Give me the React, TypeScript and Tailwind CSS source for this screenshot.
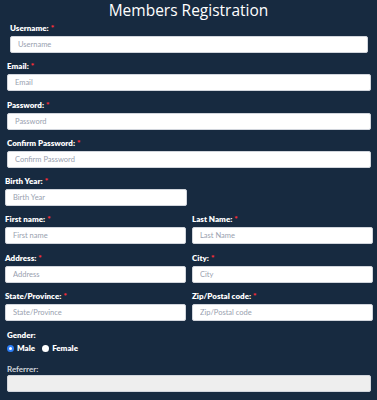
import React from "react"

type FieldProps = {
  label: string
  placeholder: string
  required?: boolean
  pad?: string
}

function Field({ label, placeholder, required = true, pad = "" }: FieldProps) {
  return (
    <div className={`flex flex-col ${pad}`}>
      <label className="h-3 flex items-center text-[8px] font-extrabold text-white leading-none">
        {label}
        {required && <span className="ml-[2px] text-red-500">*</span>}
      </label>
      <input
        placeholder={placeholder}
        className="mt-[2px] h-[17px] w-full rounded-[2px] border border-gray-300 bg-white px-[7px] text-[7.5px] text-gray-700 placeholder:text-gray-400 outline-none"
      />
    </div>
  )
}

export default function App() {
  return (
    <div
      className="w-[377px] h-[400px] overflow-hidden bg-[#172a40]"
      style={{ fontFamily: "Lato, 'Liberation Sans', sans-serif" }}
    >
      <h1
        className="h-[22px] text-center text-[15.5px] leading-[21px] text-white"
        style={{ fontFamily: "'Open Sans', sans-serif" }}
      >
        Members Registration
      </h1>

      <div className="flex flex-col gap-[7.3px]">
        <Field label="Username:" placeholder="Username" pad="pl-[10px] pr-[9px]" />
        <Field label="Email:" placeholder="Email" pad="pl-[7px] pr-[6px]" />
        <Field label="Password:" placeholder="Password" pad="pl-[7px] pr-[6px]" />
        <Field label="Confirm Password:" placeholder="Confirm Password" pad="pl-[7px] pr-[6px]" />
        <div className="pl-[5px] w-[187px]">
          <Field label="Birth Year:" placeholder="Birth Year" />
        </div>
        <div className="grid grid-cols-2 gap-[6px] pl-[5px] pr-[4px]">
          <Field label="First name: " placeholder="First name" />
          <Field label="Last Name:" placeholder="Last Name" />
        </div>
        <div className="grid grid-cols-2 gap-[6px] pl-[5px] pr-[4px]">
          <Field label="Address:" placeholder="Address" />
          <Field label="City:" placeholder="City" />
        </div>
        <div className="grid grid-cols-2 gap-[6px] pl-[5px] pr-[4px]">
          <Field label="State/Province:" placeholder="State/Province" />
          <Field label="Zip/Postal code:" placeholder="Zip/Postal code" />
        </div>
      </div>

      <div className="mt-[8px] pl-[7px]">
        <div className="h-3 flex items-center text-[8px] font-extrabold text-white">Gender:</div>
        <div className="mt-[1px] h-3 flex items-center gap-[3px] text-[8px] font-extrabold text-white">
          <span className="w-[7px] h-[7px] rounded-full border-[2px] border-[#2d7ff9] bg-white" />
          <span className="mr-[4px]">Male</span>
          <span className="w-[7px] h-[7px] rounded-full bg-white" />
          <span>Female</span>
        </div>
      </div>

      <div className="mt-[9px] pl-[7px] pr-[6px]">
        <div className="h-3 flex items-center text-[8px] font-bold text-gray-300">Referrer:</div>
        <div className="h-[17px] rounded-[2px] border border-gray-300 bg-[#eeeeee]" />
      </div>
    </div>
  )
}
